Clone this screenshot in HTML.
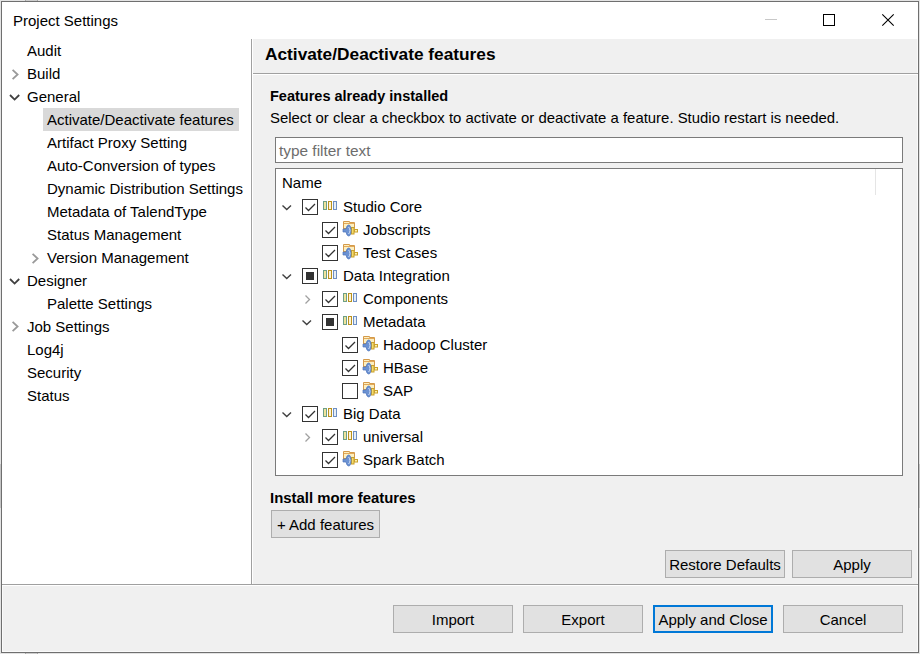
<!DOCTYPE html>
<html><head><meta charset="utf-8">
<style>
html,body{margin:0;padding:0;width:920px;height:654px;overflow:hidden;background:#e3e3e3;}
body{position:relative;font-family:"Liberation Sans",sans-serif;color:#000;}
.a{position:absolute;box-sizing:border-box;}
.t{position:absolute;font-size:15px;line-height:17px;white-space:nowrap;}
.b{font-weight:700;}
.btn{position:absolute;box-sizing:border-box;background:#e1e1e1;border:1px solid #adadad;font-size:15px;text-align:center;white-space:nowrap;}
.cb{position:absolute;box-sizing:border-box;width:16px;height:16px;border:1px solid #333;background:#fff;}
svg{position:absolute;overflow:visible;}
</style></head><body>
<!-- window -->
<div class="a" style="left:1px;top:1px;width:918px;height:652px;border:1px solid #6f6f6f;background:#f0f0f0;"></div>
<div class="a" style="left:25px;top:0;width:13px;height:1px;background:#cdcdcd;border-left:1px solid #a8a8a8;border-right:1px solid #a8a8a8;"></div>
<div class="a" style="left:25px;top:653px;width:13px;height:1px;background:#cdcdcd;border-left:1px solid #a8a8a8;border-right:1px solid #a8a8a8;"></div>
<div class="a" style="left:2px;top:2px;width:916px;height:650px;border:1px solid #fafafa;"></div>
<div class="a" style="left:0;top:464px;width:1px;height:44px;background:#c4c4c4;"></div>
<div class="a" style="left:919px;top:464px;width:1px;height:44px;background:#c4c4c4;"></div>
<!-- title bar -->
<div class="a" style="left:2px;top:2px;width:916px;height:37px;background:#fff;"></div>
<div class="t" style="left:13px;top:12px;">Project Settings</div>
<div class="a" style="left:765px;top:19px;width:12px;height:1px;background:#c8c8c8;"></div>
<div class="a" style="left:823px;top:14px;width:12px;height:12px;border:1px solid #000;"></div>
<svg style="left:0;top:0" width="920" height="40"><path d="M882.3 14.3 L893.7 25.7 M893.7 14.3 L882.3 25.7" stroke="#000" stroke-width="1.1" fill="none"/></svg>

<!-- left panel -->
<div class="a" style="left:2px;top:39px;width:249px;height:545px;background:#fff;"></div>
<div class="a" style="left:251px;top:39px;width:1px;height:545px;background:#a0a0a0;"></div>
<div class="a" style="left:252px;top:39px;width:1px;height:545px;background:#fff;"></div>
<div class="a" style="left:43px;top:108px;width:196px;height:23px;background:#d9d9d9;"></div>
<div id="lt">
<div class="t" style="left:27px;top:42px;">Audit</div>
<div class="t" style="left:27px;top:65px;">Build</div>
<div class="t" style="left:27px;top:88px;">General</div>
<div class="t" style="left:47px;top:111px;">Activate/Deactivate features</div>
<div class="t" style="left:47px;top:134px;">Artifact Proxy Setting</div>
<div class="t" style="left:47px;top:157px;">Auto-Conversion of types</div>
<div class="t" style="left:47px;top:180px;">Dynamic Distribution Settings</div>
<div class="t" style="left:47px;top:203px;">Metadata of TalendType</div>
<div class="t" style="left:47px;top:226px;">Status Management</div>
<div class="t" style="left:47px;top:249px;">Version Management</div>
<div class="t" style="left:27px;top:272px;">Designer</div>
<div class="t" style="left:47px;top:295px;">Palette Settings</div>
<div class="t" style="left:27px;top:318px;">Job Settings</div>
<div class="t" style="left:27px;top:341px;">Log4j</div>
<div class="t" style="left:27px;top:364px;">Security</div>
<div class="t" style="left:27px;top:387px;">Status</div>
</div>
<svg style="left:0;top:0" width="260" height="400" fill="none" stroke-width="1.8">
<path d="M12.6 69.8 L17.6 74.5 L12.6 79.2" stroke="#9a9a9a"/>
<path d="M10 95 L14.6 99.6 L19.2 95" stroke="#404040"/>
<path d="M32.6 253.8 L37.6 258.5 L32.6 263.2" stroke="#9a9a9a"/>
<path d="M10 279 L14.6 283.6 L19.2 279" stroke="#404040"/>
<path d="M12.6 321.8 L17.6 326.5 L12.6 331.2" stroke="#9a9a9a"/>
</svg>

<!-- right panel -->
<div class="a" style="left:253px;top:73px;width:665px;height:1px;background:#a0a0a0;"></div>
<div class="a" style="left:253px;top:74px;width:665px;height:1px;background:#fff;"></div>
<div class="t b" style="left:265px;top:45px;font-size:17.3px;line-height:19px;">Activate/Deactivate features</div>
<div class="t b" style="left:270px;top:88px;font-size:14.5px;">Features already installed</div>
<div class="t" style="left:270px;top:109px;font-size:14.92px;">Select or clear a checkbox to activate or deactivate a feature. Studio restart is needed.</div>

<div class="a" style="left:275px;top:137px;width:628px;height:26px;border:1px solid #7a7a7a;background:#fff;"></div>
<div class="t" style="left:279px;top:142px;color:#6d6d6d;font-size:15.4px;">type filter text</div>

<div class="a" style="left:275px;top:168px;width:628px;height:308px;border:1px solid #7a7a7a;background:#fff;"></div>
<div class="a" style="left:875px;top:169px;width:1px;height:26px;background:#e5e5e5;"></div>
<div class="t" style="left:282px;top:174px;">Name</div>

<div id="tree">
<div class="cb" style="left:302px;top:199px;"></div>
<div class="t" style="left:343px;top:198px;">Studio Core</div>
<div class="cb" style="left:322px;top:222px;"></div>
<div class="t" style="left:363px;top:221px;">Jobscripts</div>
<div class="cb" style="left:322px;top:245px;"></div>
<div class="t" style="left:363px;top:244px;">Test Cases</div>
<div class="cb" style="left:302px;top:268px;"></div>
<div class="a" style="left:306px;top:272px;width:8px;height:8px;background:#333;"></div>
<div class="t" style="left:343px;top:267px;">Data Integration</div>
<div class="cb" style="left:322px;top:291px;"></div>
<div class="t" style="left:363px;top:290px;">Components</div>
<div class="cb" style="left:322px;top:314px;"></div>
<div class="a" style="left:326px;top:318px;width:8px;height:8px;background:#333;"></div>
<div class="t" style="left:363px;top:313px;">Metadata</div>
<div class="cb" style="left:342px;top:337px;"></div>
<div class="t" style="left:383px;top:336px;">Hadoop Cluster</div>
<div class="cb" style="left:342px;top:360px;"></div>
<div class="t" style="left:383px;top:359px;">HBase</div>
<div class="cb" style="left:342px;top:383px;"></div>
<div class="t" style="left:383px;top:382px;">SAP</div>
<div class="cb" style="left:302px;top:406px;"></div>
<div class="t" style="left:343px;top:405px;">Big Data</div>
<div class="cb" style="left:322px;top:429px;"></div>
<div class="t" style="left:363px;top:428px;">universal</div>
<div class="cb" style="left:322px;top:452px;"></div>
<div class="t" style="left:363px;top:451px;">Spark Batch</div>
<svg style="left:0;top:0" width="920" height="654"><defs>
<g id="ck"><path d="M3.5 8.5 L6.5 11.5 L13 5" stroke="#333" stroke-width="1.3" fill="none"/></g>
<g id="eo"><path d="M0.5 6.5 L4.75 10.5 L9 6.5" stroke="#404040" stroke-width="1.4" fill="none"/></g>
<g id="ec"><path d="M3.5 4.5 L7.5 8.5 L3.5 12.5" stroke="#a0a0a0" stroke-width="1.3" fill="none"/></g>
<g id="bars">
<rect x="0.5" y="2.5" width="3" height="8" fill="#efe49a" stroke="#6f9f86"/>
<rect x="5.5" y="2.5" width="3" height="8" fill="#fff3d8" stroke="#b8921e"/>
<rect x="10.5" y="2.5" width="3" height="8" fill="#e6eef4" stroke="#6e8fc4"/>
</g>
<g id="fold">
<path d="M0.5 9 V0.5 H6.5 V1.5 H11.5 V7.5 H0.5 Z" stroke="#d49a4a" fill="#fcefc0" stroke-width="1"/>
<path d="M1 2.5 H11" stroke="#e3a95a" stroke-width="1"/>
<rect x="8.5" y="6.5" width="2.5" height="6.5" fill="#f6dc6a" stroke="#c9a02c"/>
<rect x="11.5" y="8.5" width="3" height="2.5" fill="#fff2b0" stroke="#c9a02c"/>
<path d="M0 8 H3 Q3.8 4 5.6 4 Q8 4 8 9.5 Q8 15 5.6 15 Q3.8 15 3 11 H0 Z" fill="#6c92d2" stroke="#4a72bc" stroke-width="0.7"/>
<path d="M5.6 6 Q7 7.5 7 9.5 Q7 11.5 5.6 13" stroke="#d6e2f6" stroke-width="1" fill="none"/>
</g>
</defs>
<use href="#ck" x="302" y="199"/>
<use href="#eo" x="282" y="199"/>
<use href="#bars" x="323" y="199"/>
<use href="#ck" x="322" y="222"/>
<use href="#fold" x="343" y="221"/>
<use href="#ck" x="322" y="245"/>
<use href="#fold" x="343" y="244"/>
<use href="#eo" x="282" y="268"/>
<use href="#bars" x="323" y="268"/>
<use href="#ck" x="322" y="291"/>
<use href="#ec" x="302" y="291"/>
<use href="#bars" x="343" y="291"/>
<use href="#eo" x="302" y="314"/>
<use href="#bars" x="343" y="314"/>
<use href="#ck" x="342" y="337"/>
<use href="#fold" x="363" y="336"/>
<use href="#ck" x="342" y="360"/>
<use href="#fold" x="363" y="359"/>
<use href="#fold" x="363" y="382"/>
<use href="#ck" x="302" y="406"/>
<use href="#eo" x="282" y="406"/>
<use href="#bars" x="323" y="406"/>
<use href="#ck" x="322" y="429"/>
<use href="#ec" x="302" y="429"/>
<use href="#bars" x="343" y="429"/>
<use href="#ck" x="322" y="452"/>
<use href="#fold" x="343" y="451"/>
</svg>
</div><!--treeend-->

<div class="t b" style="left:270px;top:490px;font-size:14.9px;">Install more features</div>
<div class="btn" style="left:271px;top:510px;width:109px;height:28px;line-height:28px;">+ Add features</div>

<div class="btn" style="left:665px;top:550px;width:120px;height:28px;line-height:28px;">Restore Defaults</div>
<div class="btn" style="left:792px;top:550px;width:120px;height:28px;line-height:28px;">Apply</div>

<!-- bottom bar -->
<div class="a" style="left:2px;top:584px;width:916px;height:1px;background:#a0a0a0;"></div>
<div class="a" style="left:2px;top:585px;width:916px;height:1px;background:#fff;"></div>
<div class="btn" style="left:393px;top:605px;width:120px;height:28px;line-height:28px;">Import</div>
<div class="btn" style="left:523px;top:605px;width:120px;height:28px;line-height:28px;">Export</div>
<div class="btn" style="left:653px;top:605px;width:120px;height:28px;line-height:26px;border:2px solid #0078d7;">Apply and Close</div>
<div class="btn" style="left:783px;top:605px;width:120px;height:28px;line-height:28px;">Cancel</div>
</body></html>
